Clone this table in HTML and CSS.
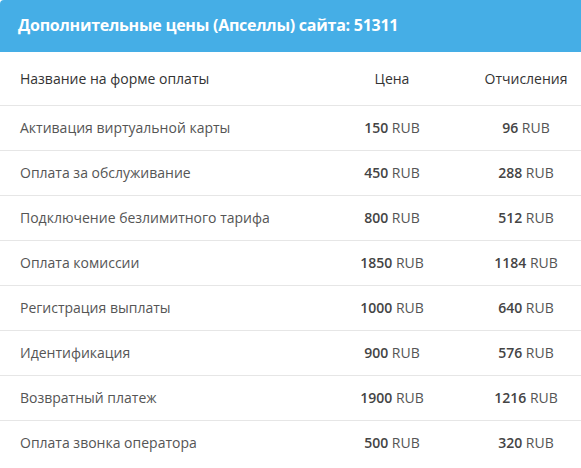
FILE: index.html
```html
<!DOCTYPE html>
<html lang="ru">
<head>
<meta charset="utf-8">
<link rel="stylesheet" href="styles.css">
</head>
<body>
<div class="panel">
  <div class="panel-head">Дополнительные цены (Апселлы) сайта: 51311</div>
  <table class="prices">
    <colgroup><col class="c1"><col class="c2"><col class="c3"></colgroup>
    <thead>
      <tr><th class="name">Название на форме оплаты</th><th>Цена</th><th>Отчисления</th></tr>
    </thead>
    <tbody>
      <tr><td class="name">Активация виртуальной карты</td><td><b>150</b> RUB</td><td><b>96</b> RUB</td></tr>
      <tr><td class="name">Оплата за обслуживание</td><td><b>450</b> RUB</td><td><b>288</b> RUB</td></tr>
      <tr><td class="name">Подключение безлимитного тарифа</td><td><b>800</b> RUB</td><td><b>512</b> RUB</td></tr>
      <tr><td class="name">Оплата комиссии</td><td><b>1850</b> RUB</td><td><b>1184</b> RUB</td></tr>
      <tr><td class="name">Регистрация выплаты</td><td><b>1000</b> RUB</td><td><b>640</b> RUB</td></tr>
      <tr><td class="name">Идентификация</td><td><b>900</b> RUB</td><td><b>576</b> RUB</td></tr>
      <tr><td class="name">Возвратный платеж</td><td><b>1900</b> RUB</td><td><b>1216</b> RUB</td></tr>
      <tr><td class="name">Оплата звонка оператора</td><td><b>500</b> RUB</td><td><b>320</b> RUB</td></tr>
    </tbody>
  </table>
</div>
</body>
</html>
```
FILE: styles.css
```css
html, body { margin: 0; padding: 0; background: #fff; }
body { font-family: "Open Sans", "Noto Sans", sans-serif; color: #555; }
.panel { width: 581px; overflow: hidden; }
.panel-head {
  background: #45aee6;
  color: #fff;
  height: 52px;
  box-sizing: border-box;
  padding: 0 18px 2px;
  display: flex;
  align-items: center;
  font-size: 16px;
  font-weight: 700;
  letter-spacing: -0.25px;
  border-top-left-radius: 4px;
}
.prices { width: 581px; border-collapse: collapse; table-layout: fixed; font-size: 14px; }
.c1 { width: 313px; }
.c2 { width: 158px; }
.c3 { width: 110px; }
.prices th, .prices td { text-align: center; padding: 0; white-space: nowrap; }
.prices th { height: 53px; font-weight: 400; color: #333; border-bottom: 1px solid #e6e6e6; }
.prices td { height: 45px; box-sizing: border-box; padding-bottom: 2px; border-bottom: 1px solid #e6e6e6; color: #555; }
.prices td.name { padding-left: 20px; }
.prices .name { text-align: left; padding-left: 20px; }
.prices b { font-weight: 600; color: #444; }
.prices tbody tr:last-child td { border-bottom: none; }
```
